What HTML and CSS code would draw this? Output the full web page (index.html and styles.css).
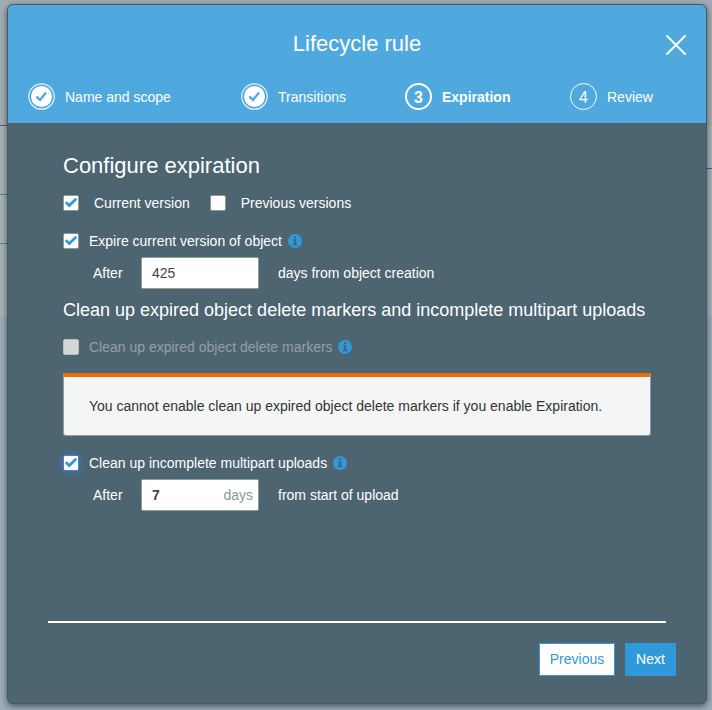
FILE: index.html
```html
<!DOCTYPE html>
<html lang="en">
<head>
<meta charset="utf-8">
<title>Lifecycle rule</title>
<link rel="stylesheet" href="styles.css">
</head>
<body>
<svg class="defs" aria-hidden="true">
  <symbol id="tick" viewBox="0 0 14 14"><path d="M2.6 7 5.3 9.5 11.5 3.6" fill="none" stroke="#3099d9" stroke-width="2.8" stroke-linecap="round"/></symbol>
  <symbol id="info" viewBox="0 0 14 14"><circle cx="7" cy="7" r="7" fill="#3099d9"/><path d="M5.9 2.2h2.3v2H5.9zM5 5.2h3.2v4.6H9.1v1.4H4.9V9.8h1V6.6H5z" fill="#4d6471"/></symbol>
  <symbol id="done" viewBox="0 0 27 27"><circle cx="13.5" cy="13.5" r="12.7" fill="none" stroke="#fff" stroke-opacity=".85" stroke-width="1.2"/><circle cx="13.5" cy="13.5" r="10.5" fill="#fff"/><path d="M9 14.2 12 17 17.4 10.2" fill="none" stroke="#4fa9de" stroke-width="2.3" stroke-linecap="round"/></symbol>
</svg>
<main class="modal">
  <header class="header">
    <h1 class="title">Lifecycle rule</h1>
    <button class="close" aria-label="Close"><svg width="20" height="20" viewBox="0 0 20 20"><path d="M1 1 19 19M19 1 1 19" stroke="#fff" stroke-width="1.8" stroke-linecap="round"/></svg></button>
    <nav class="steps">
      <div class="step"><svg class="done"><use href="#done"/></svg><span>Name and scope</span></div>
      <div class="step"><svg class="done"><use href="#done"/></svg><span>Transitions</span></div>
      <div class="step current"><span class="num">3</span><span>Expiration</span></div>
      <div class="step"><span class="num">4</span><span>Review</span></div>
    </nav>
  </header>
  <section class="content">
    <h2 class="heading">Configure expiration</h2>
    <div class="versions">
      <label class="option wide"><span class="box"><svg><use href="#tick"/></svg></span>Current version</label>
      <label class="option wide"><span class="box"></span>Previous versions</label>
    </div>
    <div class="option expire"><span class="box"><svg><use href="#tick"/></svg></span>Expire current version of object<svg class="info"><use href="#info"/></svg></div>
    <div class="days"><span class="after">After</span><div class="field"><span>425</span></div><span>days from object creation</span></div>
    <h3 class="subheading">Clean up expired object delete markers and incomplete multipart uploads</h3>
    <div class="option markers"><span class="box disabled"></span><span class="muted">Clean up expired object delete markers</span><svg class="info"><use href="#info"/></svg></div>
    <div class="notice">You cannot enable clean up expired object delete markers if you enable Expiration.</div>
    <div class="option uploads"><span class="box focused"><svg><use href="#tick"/></svg></span>Clean up incomplete multipart uploads<svg class="info"><use href="#info"/></svg></div>
    <div class="days"><span class="after">After</span><div class="field"><b>7</b><span class="unit">days</span></div><span>from start of upload</span></div>
  </section>
  <hr class="rule">
  <footer class="footer">
    <button class="btn previous">Previous</button>
    <button class="btn next">Next</button>
  </footer>
</main>
</body>
</html>
```
FILE: styles.css
```css
* { box-sizing: border-box; }
html { height: 100%; }
body {
  margin: 0;
  height: 710px;
  padding: 4px 5px 6px 7px;
  overflow: hidden;
  font: 14px/20px "Liberation Sans", Arial, sans-serif;
  color: #fff;
  background:
    linear-gradient(#4d6471, #4d6471) 0 125px / 8px 1px no-repeat,
    linear-gradient(#3d86ad, #3d86ad) 0 194px / 8px 1px no-repeat,
    linear-gradient(#3d86ad, #3d86ad) 0 243px / 8px 1px no-repeat,
    linear-gradient(#4d6471, #4d6471) 704px 168px / 8px 1px no-repeat,
    linear-gradient(#a1adb5 0 125px, #a7b3b9 125px 317px, #9badb9 317px);
}
.defs { position: absolute; width: 0; height: 0; }
.modal {
  width: 700px;
  height: 700px;
  border: 1px solid #4b585f;
  border-radius: 6px;
  background: #4d6471;
  box-shadow: 0 2px 6px rgba(0, 0, 0, .55);
  display: flex;
  flex-direction: column;
  overflow: hidden;
}
.header {
  height: 118px;
  flex: none;
  background: #4fa9de;
  display: grid;
  grid-template: 78px 1fr / 1fr 349px 1fr;
  align-items: center;
}
.title { margin: 0; grid-column: 2; font-size: 22px; font-weight: 400; line-height: 26px; text-align: center; }
.close { justify-self: end; margin: 2px 20px 0 0; padding: 0; border: 0; background: none; height: 20px; }
.close svg { display: block; }
.steps { grid-column: 1 / -1; align-self: start; display: grid; grid-template-columns: 213px 164px 165px 1fr; padding-left: 20px; }
.step { display: flex; align-items: center; gap: 10px; height: 27px; }
.done { width: 27px; height: 27px; }
.num { width: 27px; height: 27px; border: 1px solid #fff; border-radius: 50%; font-size: 16px; line-height: 27px; text-align: center; }
.current { font-weight: 700; }
.current .num { border-width: 2px; line-height: 25px; }
.content { flex: 1; padding: 29px 55px 0; }
.heading { margin: 0; font-size: 22px; font-weight: 400; line-height: 28px; }
.versions { display: flex; gap: 20px; margin-top: 13px; }
.option { display: flex; align-items: center; height: 20px; gap: 10px; }
.option.wide { gap: 15px; }
.box { width: 16px; height: 16px; border: 1px solid #8e9799; border-radius: 2px; background: #fff; }
.box svg { display: block; width: 14px; height: 14px; }
.disabled { background: #d5d7d6; border-color: #b8bdbe; }
.focused { border-color: #3d81db; box-shadow: 0 0 8px rgba(66, 133, 215, .6); }
.muted { color: #969fa3; }
.info { width: 14px; height: 14px; margin-left: -4px; }
.markers .info { margin-left: -5px; }
.expire { margin-top: 18px; }
.days { display: flex; align-items: center; margin: 6px 0 0 30px; height: 32px; }
.after { width: 48px; }
.field { width: 118px; height: 32px; margin-right: 19px; padding: 0 5px 0 10px; border: 1px solid #929b9c; border-radius: 2px; background: #fff; color: #444; display: flex; align-items: center; justify-content: space-between; }
.unit { color: #8e9797; }
.subheading { margin: 9px 0 0; font-size: 18px; font-weight: 400; line-height: 24px; white-space: nowrap; }
.markers { margin-top: 15px; }
.notice { width: 588px; height: 63px; margin-top: 16px; padding: 19px 25px; border: 1px solid #929b9c; border-top: 4px solid #eb6f07; border-radius: 0 0 3px 3px; background: #f4f6f6; color: #333; }
.uploads { margin-top: 17px; }
.rule { width: 618px; height: 2px; margin: 0 0 0 40px; border: 0; background: #fff; }
.footer { height: 80px; display: flex; justify-content: flex-end; gap: 10px; padding: 20px 30px 0 0; }
.btn { height: 33px; padding: 0 0 2px; border: 1px solid #3099d9; font: inherit; }
.previous { width: 76px; background: #fff; color: #3099d9; }
.next { width: 51px; background: #3099d9; color: #fff; }
```
